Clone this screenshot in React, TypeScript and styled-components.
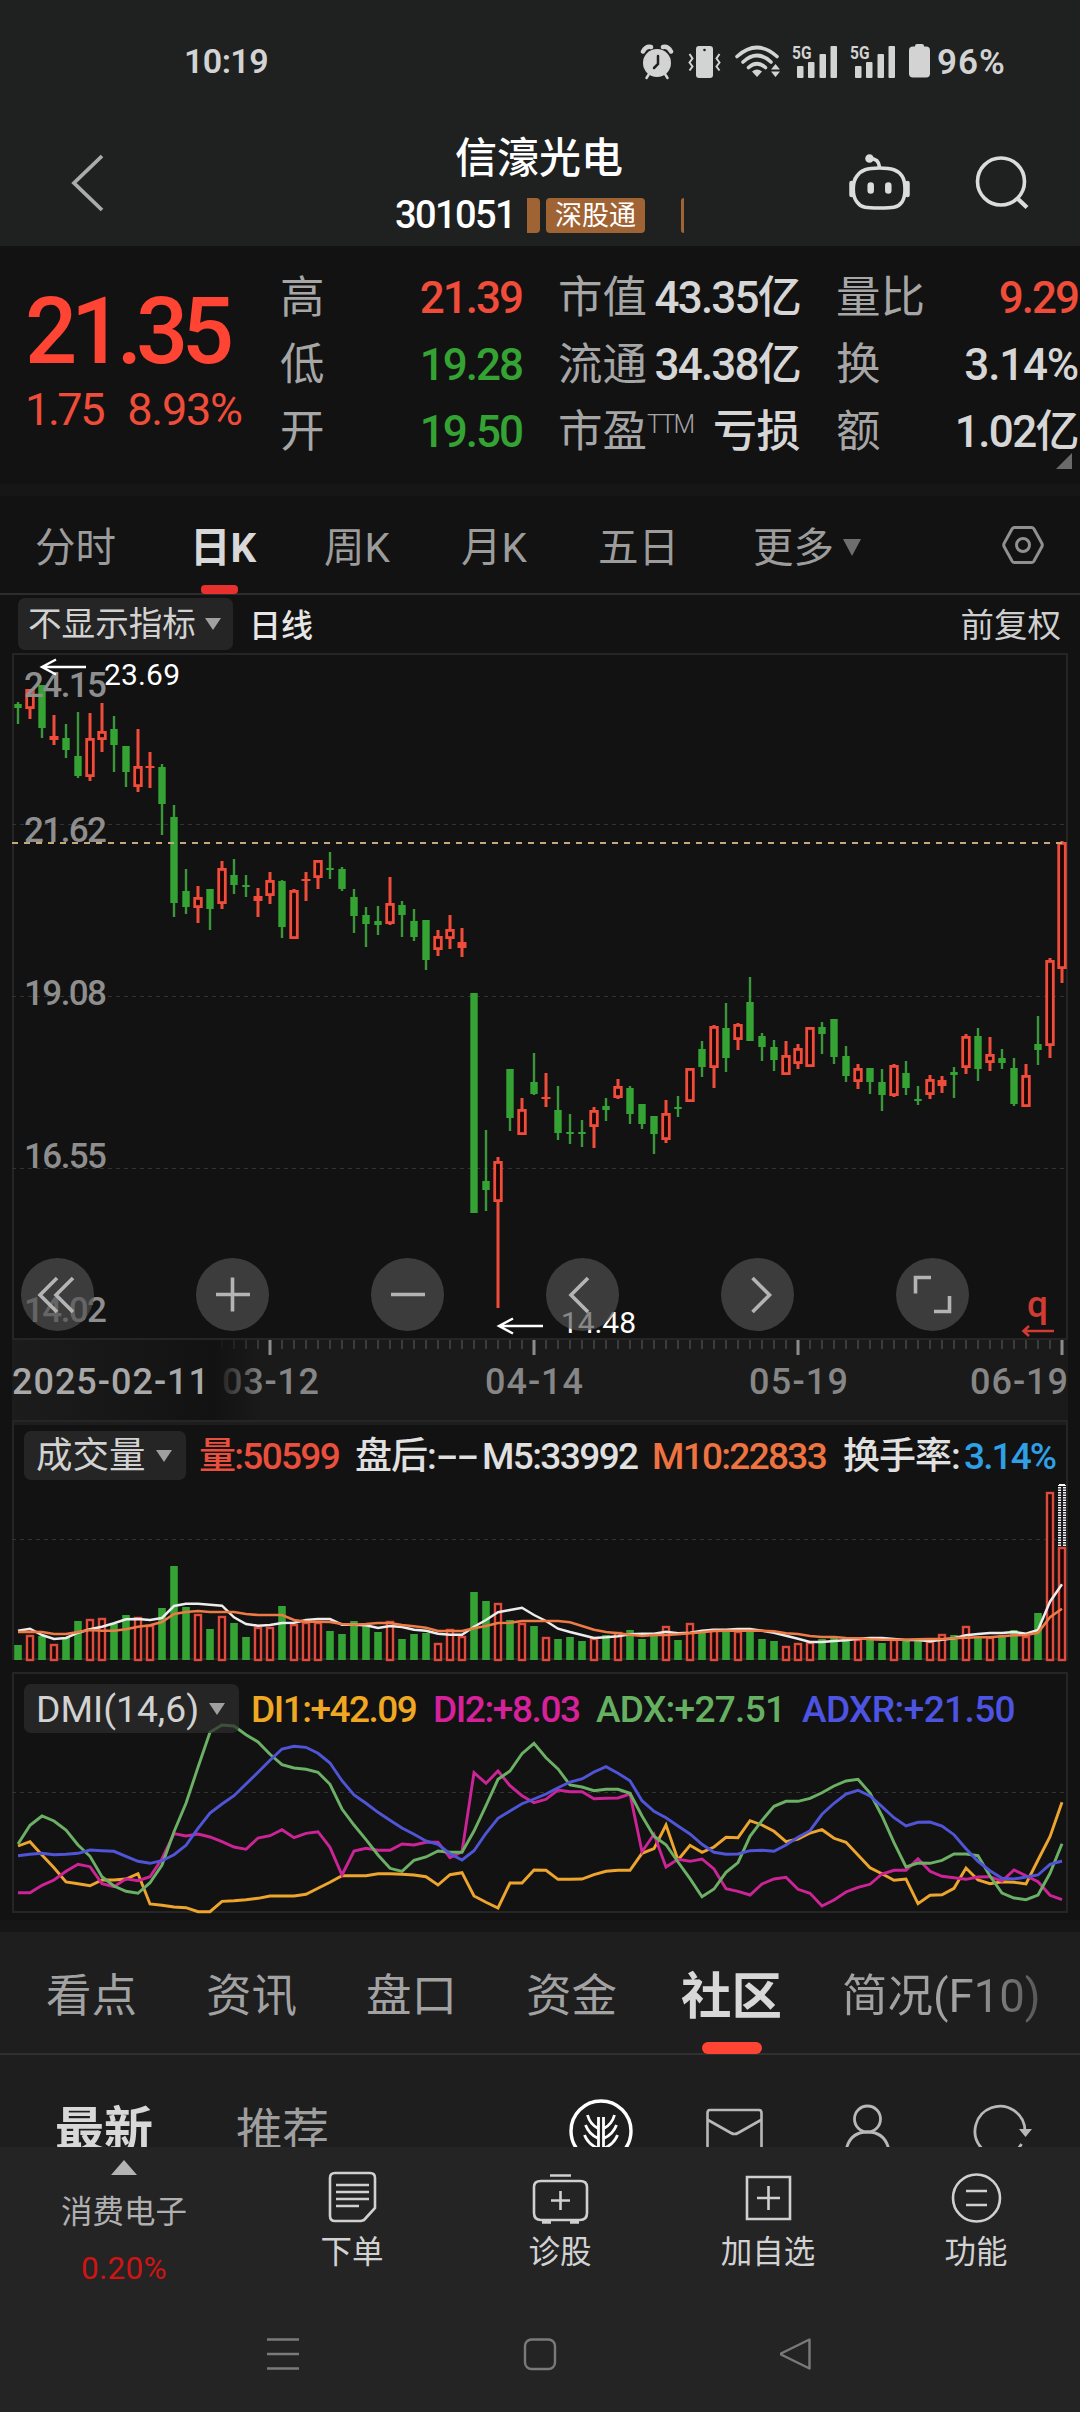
import React from "react";
import styled, { createGlobalStyle } from "styled-components";

const RED = "#f04c3a";
const GREEN = "#34a334";
const FONT = `Roboto, "Noto Sans CJK SC", "Noto Sans", sans-serif`;

const GlobalStyle = createGlobalStyle`
  body {
    margin: 0;
    background: #121212;
    font-family: ${FONT};
  }
  * { box-sizing: border-box; }
`;

const Screen = styled.div`
  width: 1080px;
  height: 2412px;
  display: flex;
  flex-direction: column;
  overflow: hidden;
  background: #121212;
  color: #d8d8d8;
  white-space: nowrap;
`;

/* ---------- status bar and title ---------- */

const StatusBar = styled.div`
  height: 122px;
  flex: none;
  display: flex;
  align-items: center;
  justify-content: space-between;
  padding: 0 0 0 184px;
  background: #1f2120;
  color: #d2d3d2;
  font-weight: 600;
`;

const Clock = styled.span`
  font-size: 34px;
  letter-spacing: -0.6px;
`;

const StatusRight = styled.div`
  width: 440px;
  display: flex;
  align-items: center;
`;

const Signals = styled.div`
  display: flex;
  gap: 10px;
  margin: 0 13px 0 8px;
`;

const Battery = styled.span`
  margin-left: 6px;
  font-size: 35px;
  letter-spacing: 1px;
  padding-top: 3px;
`;

const TitleBar = styled.header`
  height: 124px;
  flex: none;
  display: grid;
  grid-template-columns: 395px 289px 396px;
  background: #1f2120;
`;

const TitleLeft = styled.div`
  padding: 28px 0 0 66px;
`;

const TitleCenter = styled.div`
  display: flex;
  flex-direction: column;
`;

const StockName = styled.h1`
  margin: 12px 0 0 60px;
  font-size: 42px;
  line-height: 50px;
  font-weight: 500;
  color: #fff;
`;

const CodeRow = styled.div`
  display: flex;
  align-items: center;
  height: 36px;
  margin-top: 13px;
`;

const Code = styled.span`
  width: 132px;
  font-size: 38px;
  font-weight: 500;
  letter-spacing: -1.6px;
  color: #fff;
`;

const TagEdge = styled.i<{ $w: number }>`
  width: ${(p) => p.$w}px;
  height: 35px;
  background: #a06434;
  border-radius: ${(p) => (p.$w > 5 ? "0 4px 4px 0" : "3px 0 0 3px")};
`;

const Tag = styled.span`
  width: 99px;
  height: 35px;
  margin: 0 36px 0 6px;
  line-height: 36px;
  border-radius: 4px;
  text-align: center;
  font-size: 27px;
  color: #fff;
  background: #a06434;
`;

const TitleRight = styled.div`
  display: flex;
  justify-content: flex-end;
  padding: 28px 48px 0 0;
  gap: 58px;
`;

/* ---------- quote ---------- */

const Quote = styled.section`
  height: 238px;
  flex: none;
  display: flex;
  position: relative;
`;

const PriceBlock = styled.div`
  width: 280px;
  padding: 31px 0 0 25px;
  color: #ff4433;
`;

const Price = styled.div`
  font-size: 92px;
  line-height: 110px;
  font-weight: 500;
  letter-spacing: -6.4px;
`;

const Change = styled.div`
  display: flex;
  gap: 24px;
  margin-top: -3px;
  font-size: 45px;
  line-height: 52px;
  color: ${RED};
`;

const ChangeAmount = styled.span`
  letter-spacing: -2.4px;
`;

const ChangeRate = styled.span`
  letter-spacing: -1.2px;
`;

const Stats = styled.div`
  display: grid;
  grid-template-columns: repeat(3, 242px);
  grid-auto-rows: 67px;
  column-gap: 36px;
  padding-top: 19px;
`;

const Stat = styled.div`
  display: flex;
  justify-content: space-between;
  align-items: center;
  font-size: 44.5px;
  line-height: 67px;
`;

const StatLabel = styled.span`
  color: #a6a6a6;
  sup {
    font-size: 25px;
    font-weight: 300;
    line-height: 0;
    vertical-align: 14px;
    letter-spacing: -1.8px;
  }
`;

const StatValue = styled.span<{ $c?: string; $ls?: number }>`
  font-size: 44px;
  font-weight: 500;
  letter-spacing: ${(p) => p.$ls ?? -2}px;
  color: ${(p) => p.$c ?? "#d6d6d6"};
`;

const Corner = styled.i`
  position: absolute;
  right: 8px;
  bottom: 15px;
  border-left: 16px solid transparent;
  border-bottom: 16px solid #6a6a6a;
`;

const Gap = styled.div`
  height: 12px;
  flex: none;
  background: #161616;
`;

/* ---------- period tabs ---------- */

const PeriodTabs = styled.nav`
  height: 99px;
  flex: none;
  display: flex;
  border-bottom: 2px solid #2d2d2d;
  padding: 0 36px 0 35px;
`;

const PeriodTab = styled.div<{ $w: number; $on?: boolean }>`
  width: ${(p) => p.$w}px;
  height: 98px;
  position: relative;
  font-size: 40.5px;
  line-height: 104px;
  color: ${(p) => (p.$on ? "#d8d8d8" : "#9c9c9c")};
  font-weight: ${(p) => (p.$on ? 700 : 400)};
`;

const PeriodMark = styled.i`
  position: absolute;
  left: 11px;
  bottom: 0;
  width: 37px;
  height: 9px;
  border-radius: 4px;
  background: #e8312f;
`;

const Caret = styled.i`
  display: inline-block;
  border: 8px solid transparent;
  border-bottom: 0;
  border-top: 12px solid #a0a0a0;
`;

const MoreCaret = styled.i`
  display: inline-block;
  margin-left: 9px;
  vertical-align: 6px;
  border: 9.5px solid transparent;
  border-bottom: 0;
  border-top: 17px solid #6e6e6e;
`;

const SettingsSlot = styled.div`
  margin-left: auto;
  padding: 28px 0 0;
  width: 42px;
`;

const ToolRow = styled.div`
  height: 58px;
  flex: none;
  display: flex;
  align-items: center;
  padding: 0 19px 0 18px;
  line-height: 54px;
`;

const Chip = styled.div<{ $w: number; $h: number; $fs: number; $pad: number }>`
  width: ${(p) => p.$w}px;
  height: ${(p) => p.$h}px;
  line-height: ${(p) => p.$h + 3}px;
  flex: none;
  display: flex;
  align-items: center;
  justify-content: space-between;
  padding: 0 ${(p) => p.$pad + 2}px 0 ${(p) => p.$pad}px;
  border-radius: 7px;
  background: rgba(44, 44, 44, 0.72);
  font-size: ${(p) => p.$fs}px;
  color: #d2d2d2;
`;

const LineName = styled.span`
  margin: 3px 0 0 16px;
  font-size: 32px;
  font-weight: 500;
  color: #e6e6e6;
`;

const Adjust = styled.span`
  margin: 3px 0 0 auto;
  font-size: 33.5px;
  color: #cfcfcf;
`;

/* ---------- charts ---------- */

const Panel = styled.section<{ $h: number }>`
  height: ${(p) => p.$h}px;
  flex: none;
  position: relative;
  svg.plot {
    display: block;
    font-family: ${FONT};
  }
`;

const ZoomBar = styled.div`
  position: absolute;
  left: 21px;
  top: 605px;
  display: flex;
  gap: 102px;
`;

const ZoomButton = styled.button`
  width: 73px;
  height: 73px;
  padding: 0;
  border: 0;
  border-radius: 50%;
  background: rgba(81, 81, 81, 0.68);
  svg { display: block; }
`;

const Legend = styled.div<{ $top: number }>`
  position: absolute;
  left: 24px;
  right: 0;
  top: ${(p) => p.$top}px;
  height: 49px;
  line-height: 49px;
  display: flex;
  align-items: center;
`;

const LegendItem = styled.span<{ $c: string; $w: number; $ml?: number; $ls?: number }>`
  width: ${(p) => p.$w}px;
  margin-left: ${(p) => p.$ml ?? 0}px;
  padding-top: 2px;
  color: ${(p) => p.$c};
  font-size: 37px;
  font-weight: 500;
  letter-spacing: ${(p) => p.$ls ?? -1}px;
`;

const WideDash = styled.span`
  display: inline-block;
  transform: scaleX(1.8);
  transform-origin: left;
`;

/* ---------- info tabs ---------- */

const InfoTabs = styled.nav`
  height: 123px;
  flex: none;
  display: flex;
  padding-left: 46px;
  background: #1e1e1e;
  border-bottom: 2px solid #303030;
`;

const InfoTab = styled.div<{ $w: number; $on?: boolean; $fade?: boolean }>`
  width: ${(p) => p.$w}px;
  height: 122px;
  position: relative;
  line-height: 129px;
  font-size: ${(p) => (p.$on ? 50.5 : 45.5)}px;
  margin-left: ${(p) => (p.$on ? -1 : 0)}px;
  font-weight: ${(p) => (p.$on ? 700 : 400)};
  color: ${(p) => (p.$on ? "#d8d8d8" : "#a2a2a2")};
  ${(p) =>
    p.$fade &&
    `color: transparent; background: linear-gradient(90deg, #a2a2a2 60%, #545454 100%); background-clip: text; -webkit-background-clip: text;`}
`;

const InfoMark = styled.i`
  position: absolute;
  left: 21px;
  bottom: 0;
  width: 60px;
  height: 12px;
  border-radius: 6px;
  background: #ff4433;
`;

const Feed = styled.section`
  height: 92px;
  flex: none;
  display: flex;
  overflow: hidden;
  padding-left: 55px;
  background: #1e1e1e;
`;

const FeedTab = styled.span<{ $on?: boolean; $w: number }>`
  width: ${(p) => p.$w}px;
  margin-top: 38px;
  line-height: 76px;
  font-size: ${(p) => (p.$on ? 49 : 46.5)}px;
  font-weight: ${(p) => (p.$on ? 700 : 400)};
  color: ${(p) => (p.$on ? "#d8d8d8" : "#9e9e9e")};
`;

const FeedIcons = styled.div`
  margin: 43px 0 0 auto;
  padding-right: 47px;
  display: flex;
  gap: 67px;
  svg { flex: none; }
`;

/* ---------- bottom bar ---------- */

const BottomBar = styled.footer`
  height: 150px;
  flex: none;
  display: grid;
  grid-template-columns: 248px repeat(4, 208px);
  background: #242424;
`;

const Sector = styled.div`
  display: flex;
  flex-direction: column;
  align-items: center;
  padding-top: 13px;
  font-size: 31.5px;
  line-height: 40px;
  color: #b0b0b0;
`;

const UpMark = styled.i`
  border: 13px solid transparent;
  border-top: 0;
  border-bottom: 15px solid #b4b4b4;
  margin-bottom: 18px;
`;

const SectorRate = styled.span`
  margin-top: 16px;
  letter-spacing: 0.3px;
  color: #d01414;
`;

const Action = styled.div`
  display: flex;
  flex-direction: column;
  align-items: center;
  padding-top: 24px;
  font-size: 31.5px;
  line-height: 44px;
  color: #d2d2d2;
  svg { margin-bottom: 2px; }
`;

const SystemNav = styled.div`
  flex: 1;
  display: flex;
  justify-content: center;
  gap: 223px;
  padding-top: 39px;
  background: #242424;
`;

/* ---------- data ---------- */

type Candle = [string, number, number, number, number];

// colour, high, body top, body bottom, low
const candles: Candle[] = `
g 52 54 58 74|r 39 39 59 69|g 35 35 78 88|r 65 86 90 95|g 74 88 100 108|g 62 106 126 128|r 63 88 127 131|r 53 81 90 102
g 66 79 95 122|g 96 96 122 137|r 79 116 137 142|r 102 116 118 138|g 114 117 154 185|g 155 167 253 267|g 219 241 257 264|r 236 247 258 273
g 239 239 259 280|r 211 218 254 259|g 209 225 235 244|g 225 235 237 247|r 238 246 251 267|r 222 230 246 254|g 230 231 277 288|r 239 240 289 289
r 222 229 231 251|r 210 210 228 239|g 202 218 220 229|g 217 219 239 241|g 239 247 266 283|g 257 265 274 297|g 256 271 275 285|r 227 253 274 275
g 251 255 265 287|g 259 271 287 291|g 270 270 310 320|r 280 286 300 306|r 265 279 289 299|r 278 292 298 307|g 343 343 563 563|g 480 531 540 561
r 507 511 552 658|g 419 419 468 481|r 448 459 485 485|g 403 432 444 445|r 423 447 449 457|g 436 460 483 490|g 464 482 484 494|g 470 482 484 497
r 457 460 477 498|g 448 456 460 471|r 429 436 448 449|g 436 438 464 474|g 454 454 474 479|g 466 466 484 504|r 450 463 490 493|g 446 457 459 467
r 418 418 452 452|g 391 399 417 427|r 375 376 418 438|g 353 378 408 422|r 373 374 390 400|g 327 352 391 391|g 383 386 397 411|g 390 397 410 421
r 391 405 425 425|r 394 398 414 419|r 377 377 417 417|g 372 377 384 404|g 369 369 407 414|g 396 406 426 432|r 414 418 432 439|g 418 418 432 444
g 419 432 445 461|r 414 415 446 447|g 411 423 438 445|g 436 449 451 455|r 425 429 445 449|r 426 430 436 443|g 417 422 425 448|r 384 386 418 424
g 378 386 419 431|r 387 404 413 421|g 399 408 413 419|g 408 418 454 456|r 414 425 457 457|g 366 394 400 415|r 308 310 396 408|r 191 192 319 333
`
  .trim()
  .split(/[|\n]/)
  .map((s) => {
    const [c, ...n] = s.split(" ");
    return [c, ...n.map(Number)] as Candle;
  });

const volumes = [
  15, 25, 24, 16, 23, 39, 41, 42, 36, 45, 43, 35, 52, 94, 53, 46, 31, 44, 37, 23, 33, 33, 54, 36, 38, 38, 29, 26, 39, 35, 28, 39,
  21, 26, 27, 17, 31, 24, 68, 59, 57, 40, 37, 34, 23, 21, 23, 19, 22, 25, 28, 30, 21, 24, 34, 20, 37, 28, 31, 30, 29, 29, 21, 19,
  14, 17, 18, 21, 22, 21, 21, 20, 17, 21, 20, 20, 19, 26, 25, 34, 23, 23, 25, 30, 24, 47, 168, 113,
];

const ma5 = [
  632, 626, 645, 657, 654, 638, 628, 620, 610, 598, 597, 600, 594, 558, 551, 551, 554, 557, 592, 612, 617, 615, 609, 608, 600, 597,
  597, 614, 614, 616, 624, 618, 621, 629, 632, 641, 644, 644, 620, 600, 577, 570, 563, 585, 603, 626, 636, 645, 654, 652, 649, 643,
  641, 641, 635, 640, 638, 632, 629, 629, 627, 627, 632, 638, 647, 656, 666, 666, 663, 661, 656, 654, 654, 657, 660, 660, 664, 659,
  655, 646, 642, 639, 639, 636, 641, 630, 545, 493,
];
const ma10 = [
  636, 635, 636, 642, 642, 636, 630, 632, 632, 628, 620, 616, 606, 582, 576, 573, 576, 576, 576, 582, 585, 585, 585, 600, 605, 605,
  606, 612, 614, 612, 609, 609, 615, 619, 623, 633, 633, 633, 625, 618, 609, 608, 603, 603, 603, 603, 607, 618, 629, 636, 640, 644,
  648, 645, 645, 643, 640, 637, 633, 632, 632, 632, 632, 634, 640, 642, 648, 651, 651, 654, 655, 658, 659, 659, 659, 658, 657, 657,
  655, 653, 652, 652, 649, 646, 645, 638, 592, 566,
];

const di1 = [
  558, 545, 585, 623, 666, 671, 677, 660, 660, 657, 641, 732, 736, 741, 743, 755, 755, 724, 722, 719, 715, 708, 708, 708, 703, 685,
  667, 647, 647, 647, 641, 641, 643, 645, 650, 675, 644, 638, 708, 727, 744, 669, 669, 630, 631, 658, 658, 657, 644, 634, 631, 631,
  580, 566, 495, 600, 556, 577, 561, 532, 533, 482, 495, 514, 545, 537, 519, 509, 535, 547, 585, 623, 641, 661, 657, 731, 706, 704,
  685, 624, 660, 671, 665, 667, 672, 600, 530, 427,
];
const di2 = [
  698, 698, 676, 660, 634, 613, 620, 671, 680, 656, 662, 650, 596, 521, 528, 522, 531, 545, 561, 568, 534, 527, 509, 533, 520, 515,
  562, 645, 573, 565, 571, 571, 552, 555, 547, 547, 593, 575, 338, 370, 333, 377, 407, 428, 418, 390, 395, 395, 416, 415, 414, 402,
  575, 523, 621, 598, 604, 597, 627, 686, 694, 705, 672, 657, 652, 688, 700, 738, 720, 696, 682, 673, 642, 631, 631, 596, 634, 649,
  653, 658, 651, 650, 663, 630, 647, 665, 706, 719,
];
const adx = [
  552, 496, 468, 483, 510, 555, 589, 650, 678, 694, 700, 668, 615, 515, 430, 322, 217, 195, 198, 224, 246, 283, 314, 324, 328, 337,
  373, 447, 495, 539, 585, 625, 634, 601, 591, 573, 577, 577, 513, 437, 358, 333, 281, 250, 293, 327, 375, 381, 392, 388, 388, 400,
  468, 529, 554, 606, 656, 710, 687, 637, 608, 529, 481, 439, 424, 424, 415, 398, 378, 363, 358, 399, 468, 548, 621, 609, 610, 601,
  582, 582, 587, 648, 699, 714, 719, 705, 640, 551,
];
const adxr = [
  587, 583, 580, 584, 583, 580, 570, 572, 574, 589, 604, 610, 602, 584, 556, 505, 459, 432, 407, 372, 337, 301, 267, 259, 262, 280,
  309, 362, 405, 430, 457, 481, 504, 523, 543, 553, 581, 600, 572, 520, 475, 453, 431, 417, 402, 383, 366, 357, 336, 320, 340, 362,
  422, 454, 473, 498, 522, 553, 577, 583, 582, 572, 571, 574, 555, 532, 512, 463, 430, 402, 391, 408, 440, 473, 498, 487, 486, 498,
  524, 566, 604, 632, 655, 657, 651, 645, 613, 603,
];

const X = (i: number) => 18 + i * 12;
const toLine = (values: number[]) => values.map((v, i) => `${X(i)},${(v / 3).toFixed(1)}`).join(" ");

const priceTicks: [string, number][] = [
  ["24.15", 46.5],
  ["21.62", 192],
  ["19.08", 354.5],
  ["16.55", 517.5],
  ["14.02", 671.5],
];

const stats: { label: React.ReactNode; value: string; color?: string; ls?: number }[] = [
  { label: "高", value: "21.39", color: RED },
  { label: "市值", value: "43.35亿", ls: -1.8 },
  { label: "量比", value: "9.29", color: RED },
  { label: "低", value: "19.28", color: GREEN },
  { label: "流通", value: "34.38亿", ls: -1.8 },
  { label: "换", value: "3.14%", ls: -1.2 },
  { label: "开", value: "19.50", color: GREEN },
  { label: <>市盈<sup>TTM</sup></>, value: "亏损", ls: -0.5 },
  { label: "额", value: "1.02亿", ls: -1.6 },
];

/* ---------- drawings ---------- */

const Signal = () => (
  <svg width="48" height="38" viewBox="-2 -3 48 38" fill="#d2d3d2">
    <text x="0" y="14" fontSize="19" fontWeight="700" fontFamily={FONT} textLength="19.500" lengthAdjust="spacingAndGlyphs">5G</text>
    <rect x="5" y="21" width="6.500" height="12" rx="1" />
    <rect x="16" y="17" width="6.500" height="16" rx="1" />
    <rect x="27.500" y="9" width="6.500" height="24" rx="1" />
    <rect x="38.500" y="1" width="6.500" height="32" rx="1" />
  </svg>
);

const StatusIcons = () => (
  <svg width="142" height="38" viewBox="0 0 142 38" fill="none" stroke="#d2d3d2">
    <circle cx="17" cy="21" r="14" fill="#d2d3d2" stroke="none" />
    <path d="M3 9.500Q6 4 11 5M31 9.500Q28 4 23 5" strokeWidth="4.500" strokeLinecap="round" />
    <path d="M9 32l-2.500 4M25 32l2.500 4" strokeWidth="2.500" strokeLinecap="round" />
    <path d="M18 14v8l-4 4" stroke="#1f2120" strokeWidth="2.500" strokeLinecap="round" />
    <rect x="56" y="4" width="17" height="32" rx="3" fill="#d2d3d2" stroke="none" />
    <circle cx="64.500" cy="8" r="1.300" fill="#1f2120" stroke="none" />
    <path d="M49.500 12l3 4.500-3 4 3 4-3 4M79.500 12l-3 4.500 3 4-3 4 3 4" strokeWidth="2" />
    <path d="M97 14.500Q117 -3.500 137 14.500M103 20Q117 7 131 20M108.500 25.500Q117 18 125.500 25.500" strokeWidth="3.600" strokeLinecap="round" />
    <path d="M112 29.500Q117 25.500 122 29.500L117 35z" fill="#d2d3d2" stroke="none" />
    <path d="M135.500 22l4.500 5.500h-9zM135.500 35l4.500-5.500h-9z" fill="#d2d3d2" stroke="none" />
  </svg>
);

const Arrow = ({ x, y }: { x: number; y: number }) => (
  <path d={`M${x + 45} ${y}H${x + 1}M${x + 15} ${y - 7.5}L${x + 1} ${y}L${x + 15} ${y + 7.5}`} stroke="#fff" strokeWidth="2.4" fill="none" />
);

const PriceChart = () => (
  <svg className="plot" width="1080" height="687" viewBox="0 3 1080 687">
    <rect x="13" y="4" width="1054" height="685" fill="none" stroke="#252525" strokeWidth="2" />
    {[174.5, 346.5, 518.5].map((y) => (
      <line key={y} x1="12" x2="1066" y1={y} y2={y} stroke="#333" strokeWidth="1.2" strokeDasharray="4 4" />
    ))}
    {candles.map(([c, hi, top, bot, lo], i) => {
      const x = X(i);
      if (c === "g")
        return (
          <g key={i} fill={GREEN}>
            <rect x={x - 1.2} y={hi} width="2.4" height={lo - hi} fill="#3a973a" />
            <rect x={x - 3.7} y={top} width="7.4" height={bot - top} />
          </g>
        );
      const tall = bot - top > 6;
      return (
        <g key={i}>
          <rect x={x - 1.5} y={hi} width="3" height={Math.max(0, top - hi)} fill={RED} />
          <rect x={x - 1.5} y={bot} width="3" height={Math.max(0, lo - bot)} fill={RED} />
          {tall ? (
            <rect x={x - 3.3} y={top + 1.4} width="6.6" height={bot - top - 2.8} fill="#1d0505" stroke={RED} strokeWidth="2.8" />
          ) : (
            <rect x={x - 4.5} y={top} width="9" height={bot - top} fill={RED} />
          )}
        </g>
      );
    })}
    <line x1="12" x2="1067" y1="193" y2="193" stroke="#c4a97c" strokeWidth="2" strokeDasharray="6 6" />
    {priceTicks.map(([t, y]) => (
      <text key={t} x="24" y={y} fontSize="35" fontWeight="500" fill="#8e8e8e" textLength="83">{t}</text>
    ))}
    <Arrow x={41} y={17} />
    <text x="104" y="35" fontSize="30" fill="#fff" textLength="76">23.69</text>
    <Arrow x={498} y={676} />
    <text x="561" y="683" fontSize="30" fill="#fff" textLength="75">14.48</text>
    <text x="1027" y="667" fontSize="37" fontWeight="500" fill="#d23a34">q</text>
    <path d="M1054 681H1024M1029 676l-5.500 5 5.500 5" stroke="#d23a34" strokeWidth="2.600" fill="none" />
  </svg>
);

const dates: [string, number, number][] = [
  ["03-12", 222, 97],
  ["04-14", 485, 98],
  ["05-19", 749, 99],
  ["06-19", 970, 98],
];

const DateAxis = () => (
  <svg className="plot" width="1080" height="80" viewBox="0 0 1080 80">
    <defs>
      <linearGradient id="dateFade" x1="0" x2="1" y1="0" y2="0">
        <stop offset="0" stopColor="#1c1c1c" />
        <stop offset="0.8" stopColor="#121212" />
        <stop offset="1" stopColor="#121212" stopOpacity="0" />
      </linearGradient>
    </defs>
    <rect x="12" y="0" width="1056" height="80" fill="#1a1a1a" />
    {candles.map((_, i) => {
      const major = [21, 43, 65, 87].includes(i);
      return i < 16 ? null : (
        <rect key={i} x={X(i) - (major ? 1.5 : 0.5)} y="0" width={major ? 3 : 1} height={major ? 15 : 9} fill={major ? "#8c8c8c" : "#5e5e5e"} />
      );
    })}
    {dates.map(([t, x, w]) => (
      <text key={t} x={x} y="54" fontSize="36" fontWeight="500" fill="#868686" textLength={w}>{t}</text>
    ))}
    <rect x="12" y="0" width="252" height="80" fill="url(#dateFade)" />
    <text x="12" y="54" fontSize="36" fontWeight="500" fill="#a8a8a8" textLength="197">2025-02-11</text>
  </svg>
);

const VolumeChart = () => (
  <svg className="plot" width="1080" height="252" viewBox="0 0 1080 252">
    <rect x="12" y="0" width="1056" height="5" fill="#1d1d1d" />
    <rect x="13" y="1" width="1054" height="238" fill="none" stroke="#252525" strokeWidth="2" />
    <line x1="12" x2="1066" y1="119.500" y2="119.500" stroke="#333" strokeWidth="1.200" strokeDasharray="4 4" />
    {volumes.map((v, i) =>
      candles[i][0] === "g" ? (
        <rect key={i} x={X(i) - 3.8} y={240 - v} width="7.6" height={v} fill={GREEN} />
      ) : (
        <rect key={i} x={X(i) - 3} y={241 - v} width="6" height={v - 1} fill="#1d0505" stroke="#dc4b3b" strokeWidth="2.400" />
      )
    )}
    <rect x="1059" y="65" width="6" height="61" fill="#1b1b22" />
    <path d="M1059.500 126V65M1064.500 126V65" stroke="#f2f2f2" strokeWidth="3" strokeDasharray="1.500 1" />
    <rect x="1059" y="64" width="6" height="2" fill="#fff" />
    <polyline points={toLine(ma5)} fill="none" stroke="#ececec" strokeWidth="2.500" />
    <polyline points={toLine(ma10)} fill="none" stroke="#ee7a45" strokeWidth="2.600" />
  </svg>
);

const DmiChart = () => (
  <svg className="plot" width="1080" height="248" viewBox="0 12 1080 248">
    <rect x="13" y="13" width="1054" height="239" fill="none" stroke="#252525" strokeWidth="2" />
    <line x1="12" x2="1066" y1="132.500" y2="132.500" stroke="#333" strokeWidth="1.200" strokeDasharray="4 4" />
    <g fill="none" strokeWidth="2.900">
      <polyline points={toLine(di1)} stroke="#eda52e" />
      <polyline points={toLine(di2)} stroke="#cc2496" />
      <polyline points={toLine(adx)} stroke="#6bb065" />
      <polyline points={toLine(adxr)} stroke="#4f55d6" />
    </g>
  </svg>
);

const zoomIcons = [
  "M36 20L19 37L36 54M52 20L35 37L52 54",
  "M20 36.500H54M36.500 19.500V53.500",
  "M20 36.500H54",
  "M42 20L25 37L42 54",
  "M31.500 20L48.500 37L31.500 54",
  "M35 19.500H19.500V35.500M38 53.500H53.500V38",
];

const actions: [string, React.ReactNode][] = [
  [
    "下单",
    <path key="p" d="M34 50H8Q3 50 3 45V7Q3 2 8 2H43Q48 2 48 7V37L37 49ZM9 14H42M9 21H42M9 28H42M9 35H32" />,
  ],
  [
    "诊股",
    <path key="p" d="M6 10H45Q52 10 52 16V42Q52 49 45 49H6Q-1 49 -1 42V16Q-1 10 6 10ZM15 4.500H36M25.500 20V39M16 29.500H35M7 51.500H16M35 51.500H44" />,
  ],
  ["加自选", <path key="p" d="M4 6H47V48H4ZM25.500 15V39M14 27H37" />],
  [
    "功能",
    <g key="p">
      <circle cx="25.500" cy="27" r="23.500" />
      <path d="M15 20H36M15 34H36" />
    </g>,
  ],
];

export default function App() {
  return (
    <>
      <GlobalStyle />
      <Screen>
        <StatusBar>
          <Clock>10:19</Clock>
          <StatusRight>
            <StatusIcons />
            <Signals>
              <Signal />
              <Signal />
            </Signals>
            <svg width="22" height="36" viewBox="0 0 22 36" fill="#d2d3d2">
              <rect x="0" y="3.500" width="21" height="31" rx="4" />
              <rect x="6" y="1" width="9" height="5" rx="2" />
            </svg>
            <Battery>96%</Battery>
          </StatusRight>
        </StatusBar>

        <TitleBar>
          <TitleLeft>
            <svg width="44" height="66" viewBox="66 150 44 66" fill="none" stroke="#ababab" strokeWidth="3.800">
              <path d="M102 156L74 183L102 210" />
            </svg>
          </TitleLeft>
          <TitleCenter>
            <StockName>信濠光电</StockName>
            <CodeRow>
              <Code>301051</Code>
              <TagEdge $w={13} />
              <Tag>深股通</Tag>
              <TagEdge $w={3} />
            </CodeRow>
          </TitleCenter>
          <TitleRight>
            <svg width="66" height="64" viewBox="847 150 66 64" fill="none" stroke="#dcdcdc" strokeWidth="3.600">
              <path d="M879.500 168C892 168 898 170 902 176C906 182 906 196 902 202C898 208 892 208 879.500 208C867 208 861 208 857 202C852 196 852 182 857 176C861 170 867 168 879.500 168Z" />
              <path d="M879.500 167C879 161 876 158.500 870 158.500" />
              <circle cx="869.500" cy="158.500" r="2.500" fill="#dcdcdc" />
              <path d="M851.500 183v12M907.500 183v12" strokeWidth="4.500" strokeLinecap="round" />
              <path d="M870.700 185.500v5M888.300 185.500v5" strokeWidth="6.500" strokeLinecap="round" />
            </svg>
            <svg width="61" height="64" viewBox="971 150 61 64" fill="none" stroke="#dcdcdc" strokeWidth="3.600">
              <circle cx="1001" cy="181.500" r="23.500" />
              <path d="M1017 198L1027 207.500" strokeWidth="4.200" />
            </svg>
          </TitleRight>
        </TitleBar>

        <Quote>
          <PriceBlock>
            <Price>21.35</Price>
            <Change>
              <ChangeAmount>1.75</ChangeAmount>
              <ChangeRate>8.93%</ChangeRate>
            </Change>
          </PriceBlock>
          <Stats>
            {stats.map((s) => (
              <Stat key={s.value}>
                <StatLabel>{s.label}</StatLabel>
                <StatValue $c={s.color} $ls={s.ls}>{s.value}</StatValue>
              </Stat>
            ))}
          </Stats>
          <Corner />
        </Quote>
        <Gap />

        <PeriodTabs>
          <PeriodTab $w={155}>分时</PeriodTab>
          <PeriodTab $w={134} $on>
            日K
            <PeriodMark />
          </PeriodTab>
          <PeriodTab $w={137}>周K</PeriodTab>
          <PeriodTab $w={137}>月K</PeriodTab>
          <PeriodTab $w={155}>五日</PeriodTab>
          <PeriodTab $w={120}>
            更多
            <MoreCaret />
          </PeriodTab>
          <SettingsSlot>
            <svg width="42" height="42" viewBox="0 0 42 42" fill="none" stroke="#909090" strokeWidth="3">
              <path d="M12.500 3.500H29.500Q31 3.500 32 5L40 19.500Q40.500 21 40 22.500L32 37Q31 38.500 29.500 38.500H12.500Q11 38.500 10 37L2 22.500Q1.500 21 2 19.500L10 5Q11 3.500 12.500 3.500Z" />
              <circle cx="21" cy="21" r="6.500" />
            </svg>
          </SettingsSlot>
        </PeriodTabs>

        <ToolRow>
          <Chip $w={215} $h={52} $fs={33.6} $pad={10}>
            不显示指标
            <Caret />
          </Chip>
          <LineName>日线</LineName>
          <Adjust>前复权</Adjust>
        </ToolRow>

        <Panel $h={687}>
          <PriceChart />
          <ZoomBar>
            {zoomIcons.map((d) => (
              <ZoomButton key={d}>
                <svg width="73" height="73" viewBox="0 0 73 73" fill="none" stroke="#b4b4b4" strokeWidth="3.600">
                  <path d={d} />
                </svg>
              </ZoomButton>
            ))}
          </ZoomBar>
        </Panel>
        <Panel $h={80}>
          <DateAxis />
        </Panel>
        <Panel $h={252}>
          <VolumeChart />
          <Legend $top={11}>
            <Chip $w={162} $h={49} $fs={36.5} $pad={12}>
              成交量
              <Caret />
            </Chip>
            <LegendItem $c="#e94f3c" $w={156} $ml={13} $ls={-1.7}>量:50599</LegendItem>
            <LegendItem $c="#e0e0e0" $w={127}>
              盘后:<WideDash>--</WideDash>
            </LegendItem>
            <LegendItem $c="#e0e0e0" $w={170} $ls={-1.6}>M5:33992</LegendItem>
            <LegendItem $c="#ee7340" $w={191} $ls={-1.7}>M10:22833</LegendItem>
            <LegendItem $c="#e0e0e0" $w={121}>换手率:</LegendItem>
            <LegendItem $c="#2f9fe6" $w={90} $ls={-1.9}>3.14%</LegendItem>
          </Legend>
        </Panel>
        <Panel $h={248}>
          <DmiChart />
          <Legend $top={12}>
            <Chip $w={215} $h={49} $fs={37.3} $pad={12}>
              DMI(14,6)
              <Caret />
            </Chip>
            <LegendItem $c="#f0a823" $w={182} $ml={12} $ls={-1.5}>DI1:+42.09</LegendItem>
            <LegendItem $c="#d6219b" $w={163} $ls={-1.4}>DI2:+8.03</LegendItem>
            <LegendItem $c="#66b062" $w={206} $ls={-0.7}>ADX:+27.51</LegendItem>
            <LegendItem $c="#4d54e2" $w={214} $ls={-0.6}>ADXR:+21.50</LegendItem>
          </Legend>
        </Panel>
        <Gap />

        <InfoTabs>
          <InfoTab $w={160}>看点</InfoTab>
          <InfoTab $w={160}>资讯</InfoTab>
          <InfoTab $w={160}>盘口</InfoTab>
          <InfoTab $w={156}>资金</InfoTab>
          <InfoTab $w={161} $on>
            社区
            <InfoMark />
          </InfoTab>
          <InfoTab $w={200} $fade>简况(F10)</InfoTab>
        </InfoTabs>

        <Feed>
          <FeedTab $w={181} $on>最新</FeedTab>
          <FeedTab $w={120}>推荐</FeedTab>
          <FeedIcons>
            <svg width="66" height="66" viewBox="568 2097 66 66" fill="none" stroke="#fff" strokeWidth="3.400">
              <circle cx="601" cy="2130" r="30" />
              <path d="M598.500 2116V2150M603.500 2116V2150M597.500 2127Q590 2123 587.500 2114M597.500 2137Q589 2133 585.500 2124M597.500 2147Q588 2143 584.500 2134M604.500 2127Q612 2123 614.500 2114M604.500 2137Q613 2133 616.500 2124M604.500 2147Q614 2143 617.500 2134" strokeWidth="2.800" />
            </svg>
            <svg width="66" height="66" viewBox="701 2097 66 66" fill="none" stroke="#b8b8b8" strokeWidth="2.600">
              <path d="M707.500 2112Q707.500 2109 710 2109H759Q761.500 2109 761.500 2112V2160H707.500ZM708 2119L731 2132Q734.500 2134 738 2132L761 2119" />
            </svg>
            <svg width="66" height="66" viewBox="834 2097 66 66" fill="none" stroke="#b8b8b8" strokeWidth="2.800">
              <circle cx="867.500" cy="2118" r="13" />
              <path d="M845 2158Q846 2131 867.500 2131Q889 2131 890 2158" />
            </svg>
            <svg width="66" height="66" viewBox="967 2097 66 66" fill="none" stroke="#b8b8b8" strokeWidth="2.800">
              <path d="M1021.500 2143A25 25 0 1 1 1025 2130" />
              <path d="M1019 2128H1032L1025.500 2136Z" fill="#b8b8b8" stroke="none" />
            </svg>
          </FeedIcons>
        </Feed>

        <BottomBar>
          <Sector>
            <UpMark />
            消费电子
            <SectorRate>0.20%</SectorRate>
          </Sector>
          {actions.map(([label, icon]) => (
            <Action key={label}>
              <svg width="57" height="58" viewBox="-3 0 57 58" fill="none" stroke="#d0d0d0" strokeWidth="2.600">
                {icon}
              </svg>
              {label}
            </Action>
          ))}
        </BottomBar>

        <SystemNav>
          <svg width="34" height="36" viewBox="0 0 34 36" fill="none" stroke="#7a7a7a" strokeWidth="2.600">
            <path d="M1 3.500H33M1 18H33M1 32.500H33" />
          </svg>
          <svg width="34" height="36" viewBox="0 0 34 36" fill="none" stroke="#7a7a7a" strokeWidth="2.400">
            <rect x="2" y="3.500" width="30" height="29.500" rx="6.500" />
          </svg>
          <svg width="34" height="36" viewBox="2 0 34 36" fill="none" stroke="#7a7a7a" strokeWidth="2.400" strokeLinejoin="round">
            <path d="M31.500 3.500V32.500L3 18.500Q2.500 18 3 17.500Z" />
          </svg>
        </SystemNav>
      </Screen>
    </>
  );
}
